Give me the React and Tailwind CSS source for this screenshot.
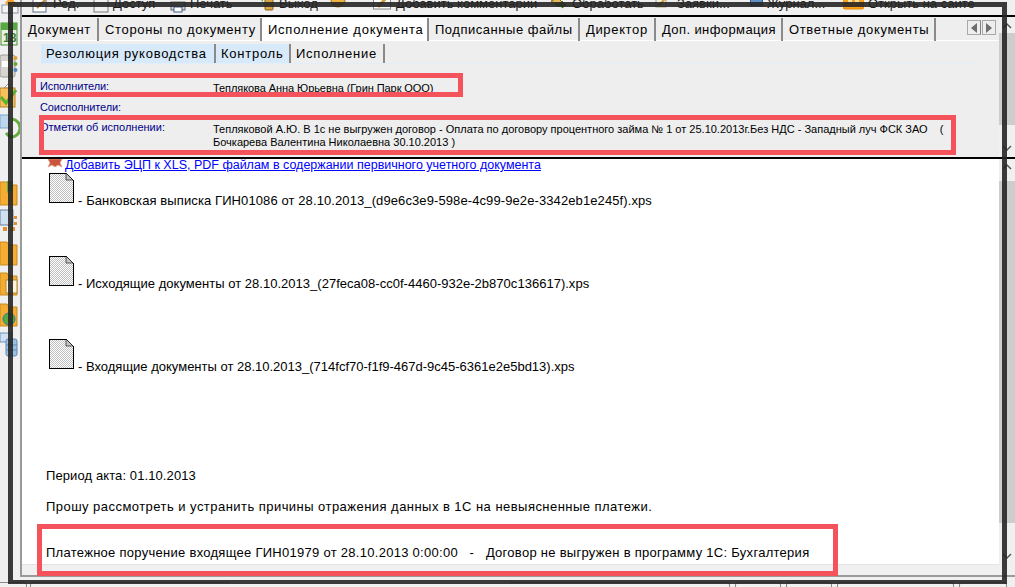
import React from "react";

const FONT = "font-['Liberation_Sans','Noto_Sans',sans-serif]";

const Icon = ({ kind }) => {
  const s = "shrink-0";
  if (kind === "doc")
    return (
      <svg width="16" height="16" viewBox="0 0 16 16" className={s}>
        <rect x="1" y="1" width="13" height="14" fill="#fff" stroke="#5a6a80" />
        <path d="M5 11 L13 3" stroke="#c98a2b" strokeWidth="2" />
      </svg>
    );
  if (kind === "box")
    return (
      <svg width="16" height="16" viewBox="0 0 16 16" className={s}>
        <rect x="1" y="2" width="14" height="13" fill="#f2f2f2" stroke="#77797c" />
      </svg>
    );
  if (kind === "print")
    return (
      <svg width="16" height="16" viewBox="0 0 16 16" className={s}>
        <rect x="1" y="5" width="14" height="8" fill="#cfd4da" stroke="#666" />
        <rect x="4" y="10" width="8" height="5" fill="#fff" stroke="#3c5a8c" />
      </svg>
    );
  if (kind === "exit")
    return (
      <svg width="17" height="16" viewBox="0 0 17 16" className={s}>
        <path d="M1 1 L5 1 L5 5 Z" fill="#5aa63c" />
        <rect x="7" y="0" width="8" height="13" rx="1" fill="#d9a441" stroke="#8a6420" />
      </svg>
    );
  if (kind === "orb")
    return (
      <svg width="16" height="16" viewBox="0 0 16 16" className={s}>
        <circle cx="8" cy="3" r="7" fill="#eeb23e" stroke="#9a7420" />
      </svg>
    );
  if (kind === "comment")
    return (
      <svg width="19" height="18" viewBox="0 0 19 18" className={s}>
        <rect x="0.5" y="2" width="17" height="10" fill="#fff" stroke="#888" />
        <path d="M5 10 L14 0" stroke="#d59a33" strokeWidth="3" />
      </svg>
    );
  if (kind === "process")
    return (
      <svg width="17" height="17" viewBox="0 0 17 17" className={s}>
        <path d="M1 4 L8 1 L12 5 L8 9 Z" fill="#e3b95c" stroke="#8a6420" />
        <path d="M7 7 L12 7 L12 4 L16 8 L12 11 L12 9 L7 9 Z" fill="#62ad3e" stroke="#3d7d22" />
      </svg>
    );
  if (kind === "req")
    return (
      <svg width="14" height="14" viewBox="0 0 14 14" className={s}>
        <rect x="1" y="0" width="10" height="10" fill="#f5f0df" stroke="#a8a08c" />
        <path d="M3 9 L11 1" stroke="#d59a33" strokeWidth="2" />
      </svg>
    );
  if (kind === "book")
    return (
      <svg width="13" height="10" viewBox="0 0 13 10" className={s}>
        <rect x="0.5" y="0" width="12" height="9" fill="#5f8fc6" stroke="#2f5a90" />
      </svg>
    );
  return (
    <svg width="21" height="13" viewBox="0 0 21 13" className={s}>
      <rect x="0" y="0" width="21" height="12" rx="2" fill="#f9a01b" stroke="#e88700" />
      <rect x="5" y="0" width="4" height="6" fill="#fde0a8" />
      <rect x="12" y="0" width="4" height="6" fill="#fde0a8" />
    </svg>
  );
};

const toolbar = [
  { icon: "doc", label: "Ред.", cls: "w-[61px]", gap: "gap-[5px]" },
  { icon: "box", label: "Доступ", cls: "w-[77px]", gap: "gap-[4px]" },
  { icon: "print", label: "Печать", cls: "w-[88px]", gap: "gap-[4px]" },
  { icon: "exit", label: "Выход", cls: "w-[72px]", gap: "gap-[4px]" },
  { icon: "orb", label: "", cls: "w-[43px]", gap: "gap-0" },
  { icon: "comment", label: "Добавить комментарии", cls: "w-[177px]", gap: "gap-[4px]" },
  { icon: "process", label: "Обработать", cls: "w-[105px]", gap: "gap-[5px]" },
  { icon: "req", label: "Заявки...", cls: "w-[95px]", gap: "gap-[8px]" },
  { icon: "book", label: "Журнал...", cls: "w-[93px]", gap: "gap-[4px]" },
  { icon: "site", label: "Открыть на сайте", cls: "w-[130px]", gap: "gap-[4px]" },
];

const tabs = [
  { t: "Документ", cls: "w-[77px] tracking-[0.65px]" },
  { t: "Стороны по документу", cls: "w-[163px] tracking-[0.65px]" },
  { t: "Исполнение документа", cls: "w-[167px] tracking-[0.75px]", active: true },
  { t: "Подписанные файлы", cls: "w-[151px] tracking-[0.53px]" },
  { t: "Директор", cls: "w-[76px] tracking-[0.65px]" },
  { t: "Доп. информация", cls: "w-[127px] tracking-[0.4px]" },
  { t: "Ответные документы", cls: "w-[153px] tracking-[0.65px]" },
];

const subTabs = [
  { t: "Резолюция руководства", cls: "w-[175px]" },
  { t: "Контроль", cls: "w-[75px]" },
  { t: "Исполнение", cls: "w-[94px]", active: true },
];

const folder = (y, h) => `M0 ${y} L7 ${y} L9 ${y + 3} L17 ${y + 3} L17 ${y + h} L0 ${y + h} Z`;

const sideIcons = [
  { h: 21, el: <><rect x="2" y="5" width="16" height="8" fill="#f4f4f4" stroke="#8b96a3" /><path d="M5 3 L10.5 -3 L16 3 L10.5 7 Z" fill="#f2a12c" /></> },
  { h: 33, el: <><rect x="1" y="2" width="16" height="22" fill="#e8f1e2" stroke="#4d8f3a" /><rect x="1" y="2" width="16" height="7" fill="#58a844" /><text x="3" y="21" fontSize="12" fontWeight="700" fill="#3b7d2b" fontFamily="Liberation Sans">18</text></> },
  { h: 30, el: <><rect x="0" y="1" width="15" height="22" rx="2" fill="#d8d5d0" stroke="#a09c96" /><rect x="2" y="7" width="11" height="6" fill="#fff" /><circle cx="15.5" cy="4" r="2" fill="#e0a030" /><circle cx="15.5" cy="10" r="2" fill="#6aa63c" /><circle cx="15.5" cy="16" r="2" fill="#4a88c8" /></> },
  { h: 30, el: <><path d="M4 4 L8 0 L12 4 Z" fill="#fff" stroke="#999" /><rect x="0" y="4" width="15" height="19" fill="#f6c05a" stroke="#b88425" /><path d="M1 13 L6 19 L16 6" fill="none" stroke="#5cb030" strokeWidth="3" /></> },
  { h: 66, el: <><rect x="0" y="1" width="9" height="13" fill="#bcd6ee" stroke="#7fa6cb" /><path d="M12 5 A9 9 0 0 1 10 23 L6 19" fill="none" stroke="#62ad3e" strokeWidth="3" /></> },
  { h: 28, el: <><path d={folder(2, 23)} fill="#f4ac32" stroke="#c98a20" /><path d="M7 1 L13 1 L13 13 L10 10 L7 13 Z" fill="#5cb048" /></> },
  { h: 32, el: <><rect x="0" y="2" width="13" height="15" fill="#cfe0f0" stroke="#6a7f99" /><rect x="3" y="19" width="4" height="4" fill="#e08f35" /><rect x="11" y="19" width="4" height="4" fill="#e08f35" /><rect x="14" y="8" width="3" height="3" fill="#e08f35" /><rect x="14" y="14" width="3" height="3" fill="#e08f35" /></> },
  { h: 31, el: <path d={folder(2, 23)} fill="#f4ac32" stroke="#c98a20" /> },
  { h: 31, el: <><path d={folder(2, 22)} fill="#f4ac32" stroke="#c98a20" /><rect x="6" y="9" width="11" height="13" fill="#fff3d8" stroke="#b08a3a" /></> },
  { h: 29, el: <><path d={folder(2, 22)} fill="#f4ac32" stroke="#c98a20" /><circle cx="9" cy="17" r="6" fill="#58a844" stroke="#2f7a9a" /></> },
  { h: 30, el: <><rect x="0" y="2" width="12" height="9" fill="#cfe0f0" stroke="#6a93bd" /><rect x="6" y="8" width="11" height="17" rx="2" fill="#9cc0e2" stroke="#5d8bb8" /><path d="M6 14 H17 M6 19 H17" stroke="#5d8bb8" /></> },
];

const DocIcon = () => (
  <svg width="26" height="31" viewBox="0 0 26 31" className="shrink-0">
    <defs>
      <pattern id="dither" width="2" height="2" patternUnits="userSpaceOnUse">
        <rect width="2" height="2" fill="#fff" />
        <rect width="1" height="1" fill="#c0c0c0" />
        <rect x="1" y="1" width="1" height="1" fill="#c0c0c0" />
      </pattern>
    </defs>
    <path d="M1 1 H18 L25 8 V30 H1 Z" fill="url(#dither)" stroke="#000" shapeRendering="crispEdges" />
    <path d="M18 1 L25 8 H18 Z" fill="#c4c4c4" stroke="#000" strokeWidth="0.6" />
  </svg>
);

const files = [
  { t: "- Банковская выписка ГИН01086 от 28.10.2013_(d9e6c3e9-598e-4c99-9e2e-3342eb1e245f).xps", cls: "tracking-[0.1px]" },
  { t: "- Исходящие документы от 28.10.2013_(27feca08-cc0f-4460-932e-2b870c136617).xps", cls: "tracking-[0.02px]" },
  { t: "- Входящие документы от 28.10.2013_(714fcf70-f1f9-467d-9c45-6361e2e5bd13).xps", cls: "tracking-[0px]" },
];

const ArrowUp = ({ cls }) => (
  <svg width="10" height="14" viewBox="0 0 10 14" className={cls}>
    <path d="M1 9 L5 5 L9 9" fill="none" stroke="#555" strokeWidth="1.5" />
  </svg>
);
const ArrowDown = ({ cls }) => (
  <svg width="10" height="14" viewBox="0 0 10 14" className={cls}>
    <path d="M1 5 L5 9 L9 5" fill="none" stroke="#555" strokeWidth="1.5" />
  </svg>
);

const Scrollbar = ({ children }) => (
  <div className="w-[16px] shrink-0 bg-[#f0f0f0] flex flex-col items-center">{children}</div>
);

const RedBox = ({ cls }) => (
  <div className={`absolute border-[5px] border-[#f4535c] pointer-events-none ${cls}`} />
);

const labelCls = "text-[#00008b] text-[11px] leading-[14px] tracking-[-0.1px] whitespace-nowrap";

export default function App() {
  return (
    <div className={`relative w-[1015px] h-[587px] overflow-hidden bg-[#f0f0f0] text-black ${FONT}`}>
      <div className="flex h-[577px]">
        {/* left icon strip */}
        <div className="w-[20px] shrink-0 flex flex-col overflow-hidden">
          {sideIcons.map((ic, i) => (
            <svg key={i} width="20" height={ic.h} viewBox={`0 0 20 ${ic.h}`} className="shrink-0 overflow-visible">
              {ic.el}
            </svg>
          ))}
        </div>

        {/* right column */}
        <div className="flex-1 min-w-0 flex flex-col border-l-2 border-b-2 border-[#9a9a9a]">
          {/* toolbar */}
          <div className="h-[15px] shrink-0 overflow-hidden flex pl-[10px] text-[13px] leading-[13px] text-[#1a1a1a]">
            {toolbar.map((t) => (
              <div key={t.icon} className={`flex ${t.gap} ${t.cls} shrink-0 items-start -mt-[3px]`}>
                <Icon kind={t.icon} />
                {t.label && <span className="whitespace-nowrap">{t.label}</span>}
              </div>
            ))}
          </div>
          <div className="h-[2px] bg-black shrink-0" />

          {/* document header */}
          <div className="h-[140px] shrink-0 flex bg-[#eeeeee]">
            <div className="flex-1 min-w-0 flex flex-col">
              {/* main tabs */}
              <div className="h-[24px] shrink-0 flex items-start pt-[1px] border-b border-white pr-[3px]">
                {tabs.map((t) => (
                  <div
                    key={t.t}
                    className={`${t.cls} h-[23px] shrink-0 flex items-center pl-[6px] text-[13px] whitespace-nowrap border-r-2 border-[#8a8a8a] ${t.active ? "bg-white" : ""}`}
                  >
                    {t.t}
                  </div>
                ))}
                <div className="ml-auto flex gap-[1px] pt-[2px]">
                  <div className="w-[14px] h-[15px] border border-[#a8a8a8] border-r-[#808080] flex items-center justify-center">
                    <svg width="6" height="10" viewBox="0 0 6 10"><path d="M6 0 V10 L0 5 Z" fill="#6e6e6e" /></svg>
                  </div>
                  <div className="w-[14px] h-[15px] border border-[#a8a8a8] flex items-center justify-center">
                    <svg width="6" height="10" viewBox="0 0 6 10"><path d="M0 0 V10 L6 5 Z" fill="#6e6e6e" /></svg>
                  </div>
                </div>
              </div>

              {/* sub tabs */}
              <div className="h-[23px] shrink-0 mr-[20px] ml-[19px] flex items-end border-b border-[#e0effa]">
                {subTabs.map((t) => (
                  <div
                    key={t.t}
                    className={`${t.cls} h-[19px] shrink-0 flex items-center pl-[5px] text-[13px] tracking-[0.75px] whitespace-nowrap border-r-2 border-[#8a8a8a] ${t.active ? "" : "bg-[#d8eafa]"}`}
                  >
                    {t.t}
                  </div>
                ))}
              </div>

              {/* fields */}
              <div className="pl-[18px] pt-[15px] grid grid-cols-[173px_1fr] auto-rows-min">
                <div className={`h-[21px] ${labelCls}`}>Исполнители:</div>
                <div className="h-[21px] text-[11px] tracking-[-0.07px] leading-[14px] pt-[2px] whitespace-nowrap">Теплякова Анна Юрьевна (Грин Парк ООО)</div>
                <div className={`h-[19px] ${labelCls}`}>Соисполнители:</div>
                <div className="h-[19px]" />
                <div className={`pt-[1px] !tracking-[0px] ${labelCls}`}>Отметки об исполнении:</div>
                <div className="text-[11px] leading-[13px] pt-[4px] whitespace-pre">
                  {"Тепляковой А.Ю. В 1с не выгружен договор - Оплата по договору процентного займа № 1 от 25.10.2013г.Без НДС - Западный луч ФСК ЗАО    (\nБочкарева Валентина Николаевна 30.10.2013 )"}
                </div>
              </div>
            </div>
            <Scrollbar>
              <ArrowUp cls="mt-[2px]" />
              <div className="w-full h-[92px] bg-[#cdcdcd]" />
              <ArrowDown cls="mt-[16px]" />
            </Scrollbar>
          </div>
          <div className="h-[2px] bg-black shrink-0" />

          {/* body */}
          <div className="flex-1 min-h-0 flex">
            <div className="flex-1 min-w-0 flex flex-col">
              <div className="flex-1 min-h-0 bg-white pl-[25px] text-[13px] border-b border-[#e4e4e4] overflow-hidden">
                <div className="h-[12px] flex items-start gap-[2px]">
                  <svg width="16" height="9" viewBox="0 0 16 9" className="shrink-0">
                    <path d="M1 0 L15 0 L13 4 L15 8 L11 6 L8 8 L5 6 L1 8 L3 4 Z" fill="#c9553c" stroke="#e6a58c" strokeWidth="0.7" />
                  </svg>
                  <a href="#" className="text-[#0000ff] text-[12.5px] underline leading-[14px] -mt-[1px] whitespace-nowrap">
                    Добавить ЭЦП к XLS, PDF файлам в содержании первичного учетного документа
                  </a>
                </div>
                <div className="flex flex-col gap-[52px] pl-[1px] pt-[1px]">
                  {files.map((f) => (
                    <div key={f.t} className="h-[31px] flex items-end gap-[4px]">
                      <DocIcon />
                      <span className={`leading-[14px] -mb-[5px] whitespace-nowrap ${f.cls}`}>{f.t}</span>
                    </div>
                  ))}
                </div>
                <div className="mt-[99px] leading-[15px] tracking-[0.1px] -ml-[1px] whitespace-nowrap">Период акта: 01.10.2013</div>
                <div className="mt-[16px] leading-[15px] tracking-[0.46px] -ml-[1px] whitespace-nowrap">
                  Прошу рассмотреть и устранить причины отражения данных в 1С на невыясненные платежи.
                </div>
                <div className="mt-[31px] leading-[15px] tracking-[0.28px] -ml-[1px] whitespace-pre">
                  {"Платежное поручение входящее ГИН01979 от 28.10.2013 0:00:00   -   Договор не выгружен в программу 1С: Бухгалтерия"}
                </div>
              </div>
              <div className="h-[10px] shrink-0 bg-[#f0f0f0]" />
            </div>
            <Scrollbar>
              <ArrowUp cls="mt-[1px]" />
              <div className="w-full h-[342px] bg-[#cdcdcd] mt-[7px]" />
              <ArrowDown cls="mt-[26px]" />
            </Scrollbar>
          </div>
        </div>
      </div>

      {/* bottom strip */}
      <div className="h-[10px] flex items-start pt-[5px]">
        <div className="w-[27px] h-[5px] border-t border-r border-[#888] rounded-tr-[3px]" />
        <div className="w-[200px] ml-[3px] h-[5px] border-t border-l border-[#888] rounded-tl-[3px]" />
        <div className="ml-auto flex gap-[5px] pr-[8px]">
          <div className="w-[220px] h-[5px] border-t border-r border-[#888] rounded-tr-[3px]" />
          <div className="w-[46px] h-[5px] border-t border-x border-[#888] rounded-t-[3px]" />
          <div className="w-[46px] h-[5px] border-t border-x border-[#888] rounded-t-[3px]" />
          <div className="w-[117px] h-[5px] border-t border-x border-[#888] rounded-t-[3px]" />
          <div className="w-[48px] h-[5px] border-t border-x border-[#888] rounded-t-[3px]" />
        </div>
      </div>

      {/* annotation overlays: red highlight boxes */}
      <RedBox cls="left-[31px] top-[73px] w-[432px] h-[24px]" />
      <RedBox cls="left-[39px] top-[115px] w-[917px] h-[40px]" />
      <RedBox cls="left-[37px] top-[524px] w-[801px] h-[52px]" />

      {/* annotation overlay: dark frame drawn over the screenshot */}
      <div className="absolute left-[8px] top-[2px] w-[999px] h-[582px] border-x-[5px] border-t-[5px] border-b-[4px] border-[#262626]/90 pointer-events-none" />
    </div>
  );
}
